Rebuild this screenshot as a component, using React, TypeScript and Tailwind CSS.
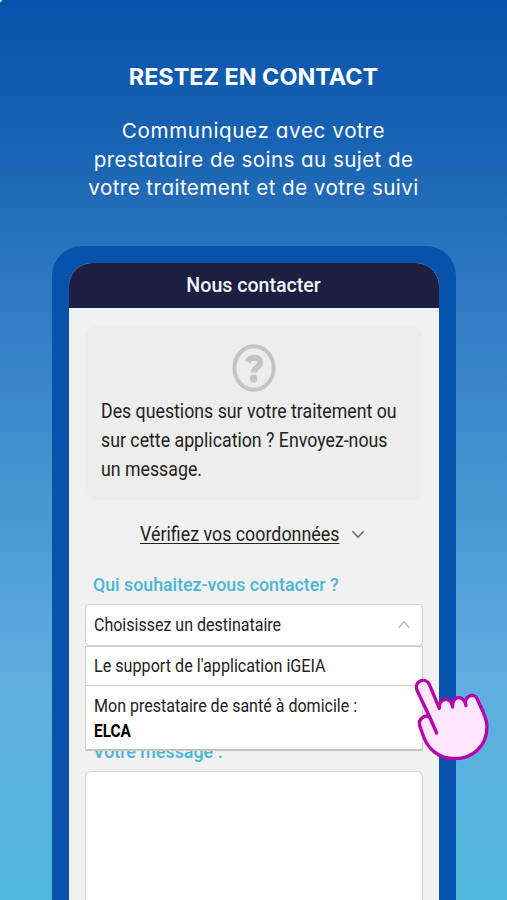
function QuestionIcon() {
  return (
    <svg
      viewBox="0 0 44 48"
      preserveAspectRatio="none"
      className="mx-auto h-12 w-11"
      fill="none"
      aria-hidden="true"
    >
      <ellipse cx="22" cy="24" rx="19.6" ry="21.8" stroke="#c4c4c4" strokeWidth="3.9" />
      <path
        d="M15.4 18 C18 12.4 28.3 12.2 28.3 18.6 C28.3 23.8 21.6 23 21.7 28.6"
        stroke="#c4c4c4"
        strokeWidth="6"
      />
      <ellipse cx="21.7" cy="34.6" rx="3.7" ry="4" fill="#c4c4c4" />
    </svg>
  );
}

function PointingHand() {
  return (
    <svg
      viewBox="0 0 330 330"
      className="pointer-events-none absolute top-[665px] left-[395px] h-[110px] w-[110px]"
      fill="none"
      stroke="#b800ac"
      strokeWidth="10"
      strokeLinecap="round"
      strokeLinejoin="round"
      aria-hidden="true"
    >
      <path
        d="M104 156 L66 76 C55 51 90 33 103 58 L133 130 C129 100 166 91 173 126 C169 94 205 85 213 122 C204 92 238 82 246 101 C260 133 276 157 276 184 C276 244 233 281 179 281 C129 281 99 250 86 216 L74 182 C68 160 92 148 104 156 Z"
        fill="#fde6ff"
      />
      <path d="M104 156 L125 204" />
    </svg>
  );
}

function Chevron({ className }: { className: string }) {
  return (
    <svg
      viewBox="0 0 14 9"
      className={className}
      fill="none"
      stroke="currentColor"
      strokeWidth="1.6"
      aria-hidden="true"
    >
      <path d="M1.5 1.3 L7 7.2 L12.5 1.3" />
    </svg>
  );
}

export default function App() {
  return (
    <main className="relative flex h-[900px] w-[507px] flex-col overflow-hidden bg-linear-[180deg,#0852ac_0%,#1b65b4_18%,#2873bd_27%,#3580c5_38%,#4795d1_55%,#60aee0_76%,#58b1dd_87%,#4fb6da_100%] font-['Roboto',sans-serif] text-[#222]">
      <span className="absolute top-0 left-0 size-[2px] rounded-br-xs bg-white" />

      {/* Headline */}
      <header className="flex h-[246px] shrink-0 flex-col items-center pt-[61px] font-['Inter',sans-serif] whitespace-nowrap text-white">
        <h1 className="text-[23.4px] leading-8 font-bold">RESTEZ EN CONTACT</h1>
        <p className="mt-6 flex flex-col items-center text-[20.6px] leading-[28.5px] [font-feature-settings:'cv11','ss03']">
          <span className="tracking-[0.63px]">Communiquez avec votre</span>
          <span className="tracking-[0.41px]">prestataire de soins au sujet de</span>
          <span className="tracking-[0.44px]">votre traitement et de votre suivi</span>
        </p>
      </header>

      {/* Phone */}
      <section className="ml-[52px] flex w-[404px] grow flex-col rounded-t-[30px] bg-[#0752aa] px-[17px] pt-[17px]">
        <div className="flex grow flex-col overflow-hidden rounded-t-[23px] bg-[#f1f1f1]">
          <div className="flex h-[45px] shrink-0 items-center justify-center bg-[#1c1f3f] pb-0.5 text-[20px] font-medium text-[#f4f4fa]">
            <span className="scale-x-[0.98]">Nous contacter</span>
          </div>

          <div className="flex grow flex-col px-4 pt-[18px] whitespace-nowrap">
            <div className="h-[174px] shrink-0 rounded-xl bg-[#ededed] pt-[18px] pl-4">
              <div className="-ml-4">
                <QuestionIcon />
              </div>
              <p className="mt-[5px] flex flex-col items-start text-[19.5px] leading-[29px]">
                <span className="origin-left scale-x-[0.91]">Des questions sur votre traitement ou</span>
                <span className="origin-left scale-x-[0.91]">sur cette application ? Envoyez-nous</span>
                <span className="origin-left scale-x-[0.91]">un message.</span>
              </p>
            </div>

            <button className="mt-[21px] ml-[55px] flex h-7 w-[225px] shrink-0 items-center justify-between">
              <span className="w-[199px] origin-left scale-x-[0.915] text-left text-[19.5px] underline decoration-1 underline-offset-2">
                Vérifiez vos coordonnées
              </span>
              <Chevron className="mb-0.5 h-[9px] w-[14px] text-[#666]" />
            </button>

            <label className="mt-6 ml-2 h-6 origin-left scale-x-[0.935] text-[19px] leading-6 font-medium text-[#4ab6d3]">
              Qui souhaitez-vous contacter ?
            </label>

            <div className="mt-[7px] flex h-[42px] shrink-0 items-center justify-between rounded border border-[#d2d2d2] bg-white pr-[11px] pl-2 text-[17.5px]">
              <span className="origin-left scale-x-[0.915]">Choisissez un destinataire</span>
              <Chevron className="mb-0.5 h-[9px] w-[14px] rotate-180 text-[#bbb]" />
            </div>

            <div className="relative h-[125px] shrink-0">
              <label className="absolute top-[94px] left-2 origin-left scale-x-[0.94] text-[19px] leading-6 font-medium text-[#4ab6d3]">
                Votre message :
              </label>
              <ul className="relative h-[105px] border border-b-2 border-[#d0d0d0] border-b-[#c4c4c4] bg-white text-[17.5px] leading-[25px]">
                <li className="flex h-[39px] items-center border-b border-[#d0d0d0] pl-2">
                  <span className="origin-left scale-x-[0.923]">Le support de l'application iGEIA</span>
                </li>
                <li className="flex flex-col items-start pt-2 pl-2">
                  <span className="origin-left scale-x-[0.916]">Mon prestataire de santé à domicile :</span>
                  <strong className="origin-left scale-x-[0.88] font-bold text-black">ELCA</strong>
                </li>
              </ul>
            </div>

            <div className="grow rounded-t-md border border-b-0 border-[#d4d4d4] bg-white" />
          </div>
        </div>
      </section>

      <PointingHand />
    </main>
  );
}
